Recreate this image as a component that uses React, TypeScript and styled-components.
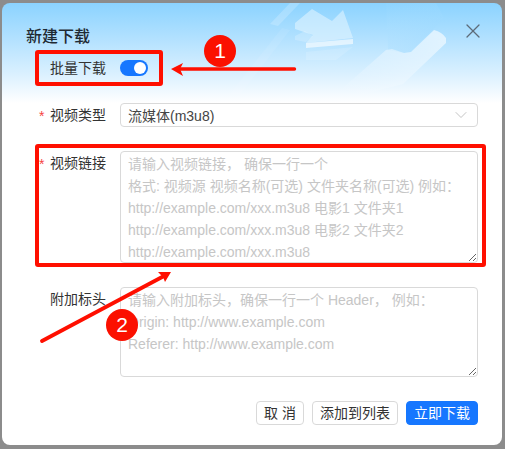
import styled, { createGlobalStyle } from 'styled-components';
import { ChevronDown, X } from 'lucide-react';

const Global = createGlobalStyle`
  html, body { margin: 0; padding: 0; }
  body { font-family: "Liberation Sans", "Noto Sans CJK SC", sans-serif; }
`;

const Backdrop = styled.div`
  width: 505px;
  height: 449px;
  background: #8c8c8c;
  padding: 3px 3px 4px 2px;
  box-sizing: border-box;
  position: relative;
  overflow: hidden;
`;

const Dialog = styled.div`
  position: relative;
  height: 100%;
  border-radius: 8px;
  overflow: hidden;
  background: linear-gradient(180deg, #8bd3ff 0%, #b5e2ff 38px, #d9f0ff 70px, #ffffff 100px);
  padding: 23px 24px 20px 24px;
  box-sizing: border-box;
`;

const Art = styled.svg`
  position: absolute;
  left: 200px;
  top: 0;
`;

const Title = styled.h2`
  position: relative;
  margin: 0;
  font-size: 16px;
  line-height: 22px;
  font-weight: 500;
  color: #1f2a33;
`;

const CloseButton = styled.button`
  position: absolute;
  top: 16px;
  right: 17px;
  padding: 0;
  border: 0;
  background: none;
  color: #5d6b78;
  display: flex;
`;

const Form = styled.div`
  position: relative;
  display: flex;
  flex-direction: column;
  margin-top: 8px;
`;

const Row = styled.div<{ $gap: number }>`
  display: grid;
  grid-template-columns: 94px 358px;
  margin-bottom: ${(p) => p.$gap}px;
`;

const Label = styled.label<{ $required?: boolean }>`
  position: relative;
  padding-left: 24px;
  font-size: 14px;
  line-height: 24px;
  color: #333;
  white-space: nowrap;
  ${(p) =>
    p.$required &&
    `&::before {
      content: '*';
      position: absolute;
      left: 13px;
      top: 1px;
      color: #f5453f;
    }`}
`;

const SwitchTrack = styled.div`
  width: 28px;
  height: 16px;
  margin-top: 4px;
  border-radius: 8px;
  background: #1677ff;
  position: relative;
`;

const SwitchKnob = styled.span`
  position: absolute;
  top: 2px;
  right: 2px;
  width: 12px;
  height: 12px;
  border-radius: 50%;
  background: #fff;
`;

const Select = styled.div`
  height: 24px;
  box-sizing: border-box;
  padding: 0 6px 0 7px;
  border: 1px solid #d9d9d9;
  border-radius: 4px;
  background: #fff;
  display: flex;
  align-items: center;
  justify-content: space-between;
  font-size: 14px;
  color: #444;
`;

const Area = styled.textarea<{ $height: number }>`
  display: block;
  width: 358px;
  height: ${(p) => p.$height}px;
  box-sizing: border-box;
  margin: 0;
  padding: 1px 7px;
  border: 1px solid #d9d9d9;
  border-radius: 4px;
  background: transparent;
  font-family: inherit;
  font-size: 14px;
  line-height: 22px;
  resize: vertical;
  outline: none;
  overflow: hidden;
  &::placeholder {
    color: #c6c6c6;
    opacity: 1;
  }
`;

const Footer = styled.div`
  display: flex;
  justify-content: flex-end;
  gap: 8px;
  margin-top: 24px;
  width: 452px;
`;

const Button = styled.button<{ $primary?: boolean; $width: number }>`
  width: ${(p) => p.$width}px;
  height: 24px;
  padding: 0;
  border-radius: 4px;
  border: 1px solid ${(p) => (p.$primary ? '#1677ff' : '#d9d9d9')};
  background: ${(p) => (p.$primary ? '#1677ff' : '#fff')};
  color: ${(p) => (p.$primary ? '#fff' : '#333')};
  font-family: inherit;
  font-size: 14px;
  line-height: 22px;
`;

const Overlay = styled.svg`
  position: absolute;
  left: 0;
  top: 0;
  pointer-events: none;
`;

const Marker = styled.div<{ $x: number; $y: number }>`
  position: absolute;
  left: ${(p) => p.$x - 16}px;
  top: ${(p) => p.$y - 16}px;
  width: 32px;
  height: 32px;
  border-radius: 50%;
  background: #fb1000;
  color: #fff;
  font-size: 21px;
  line-height: 32px;
  text-align: center;
`;

const App = () => (
  <Backdrop>
    <Global />
    <Dialog>
      <Art width="300" height="100" viewBox="202 3 300 100" fill="none">
        <defs>
          <linearGradient id="tray" x1="0.75" y1="0" x2="0.2" y2="1">
            <stop offset="0" stopColor="#ffffff" stopOpacity="0.6" />
            <stop offset="1" stopColor="#ffffff" stopOpacity="0" />
          </linearGradient>
          <linearGradient id="panel" x1="0.2" y1="0" x2="0.8" y2="1">
            <stop offset="0" stopColor="#b9e5ff" stopOpacity="0.05" />
            <stop offset="1" stopColor="#8ed3ff" stopOpacity="0.35" />
          </linearGradient>
        </defs>
        <path d="M270 24 L290 3 L300 3 L278 26 Z" fill="#ffffff" opacity="0.2" />
        <path d="M225 100 L282 28 L290 30 L236 100 Z" fill="#ffffff" opacity="0.08" />
        <path d="M386 3 L436 3 L444 18 L411 52 L404 53 L388 50 Z" fill="url(#panel)" />
        <path d="M343 88 L386 50 L392 49 L404 53 L411 52 L434 30 Q442 32 446 38 L446 43 L403 84 L340 100 Z" fill="url(#tray)" />
        <path d="M295 23 L312 9 L332 21 L343 10 L353 38 L306 43 L313 35 L295 29 Z" fill="#e6f6ff" opacity="0.55" />
        <path d="M306 43 L353 39 L353 44 L306 48 Z" fill="#ffffff" opacity="0.6" />
        <path d="M295 36 L305 31 L313 36 L306 42 L295 40 Z" fill="#ffffff" opacity="0.2" />
        <path d="M306 52 L353 47 L336 60 L306 60 Z" fill="#ffffff" opacity="0.14" />
      </Art>
      <CloseButton aria-label="关闭">
        <X size={24} strokeWidth={1.3} />
      </CloseButton>
      <Title>新建下载</Title>
      <Form>
        <Row $gap={23}>
          <Label>批量下载</Label>
          <SwitchTrack>
            <SwitchKnob />
          </SwitchTrack>
        </Row>
        <Row $gap={24}>
          <Label $required>视频类型</Label>
          <Select>
            流媒体(m3u8)
            <ChevronDown size={20} strokeWidth={1} color="#b8b8b8" />
          </Select>
        </Row>
        <Row $gap={24}>
          <Label $required>视频链接</Label>
          <Area
            $height={112}
            placeholder={
              '请输入视频链接， 确保一行一个\n格式: 视频源 视频名称(可选) 文件夹名称(可选) 例如：\nhttp://example.com/xxx.m3u8 电影1 文件夹1\nhttp://example.com/xxx.m3u8 电影2 文件夹2\nhttp://example.com/xxx.m3u8'
            }
          />
        </Row>
        <Row $gap={0}>
          <Label>附加标头</Label>
          <Area
            $height={90}
            placeholder={
              '请输入附加标头，确保一行一个 Header， 例如：\nOrigin: http://www.example.com\nReferer: http://www.example.com'
            }
          />
        </Row>
        <Footer>
          <Button $width={48}>取 消</Button>
          <Button $width={86}>添加到列表</Button>
          <Button $primary $width={72}>立即下载</Button>
        </Footer>
      </Form>
    </Dialog>
    <Overlay width="505" height="449" viewBox="0 0 505 449" fill="none">
      <rect x="37" y="52" width="124" height="32" stroke="#ff0f00" strokeWidth="4" rx="1" />
      <rect x="37" y="146" width="447" height="119" stroke="#ff0f00" strokeWidth="4" rx="1" />
      <path d="M294.5 69 L178 69" stroke="#ff0f00" strokeWidth="3.4" strokeLinecap="round" />
      <path d="M171 69 L183 63 L180 69 L183 76 Z" fill="#ff0f00" />
      <path d="M42 341 L164 276" stroke="#ff0f00" strokeWidth="3.8" strokeLinecap="round" />
      <path d="M171 272 L158 272 L163 277 L165 282 Z" fill="#ff0f00" />
    </Overlay>
    <Marker $x={220} $y={51}>1</Marker>
    <Marker $x={122} $y={325}>2</Marker>
  </Backdrop>
);

export default App;
